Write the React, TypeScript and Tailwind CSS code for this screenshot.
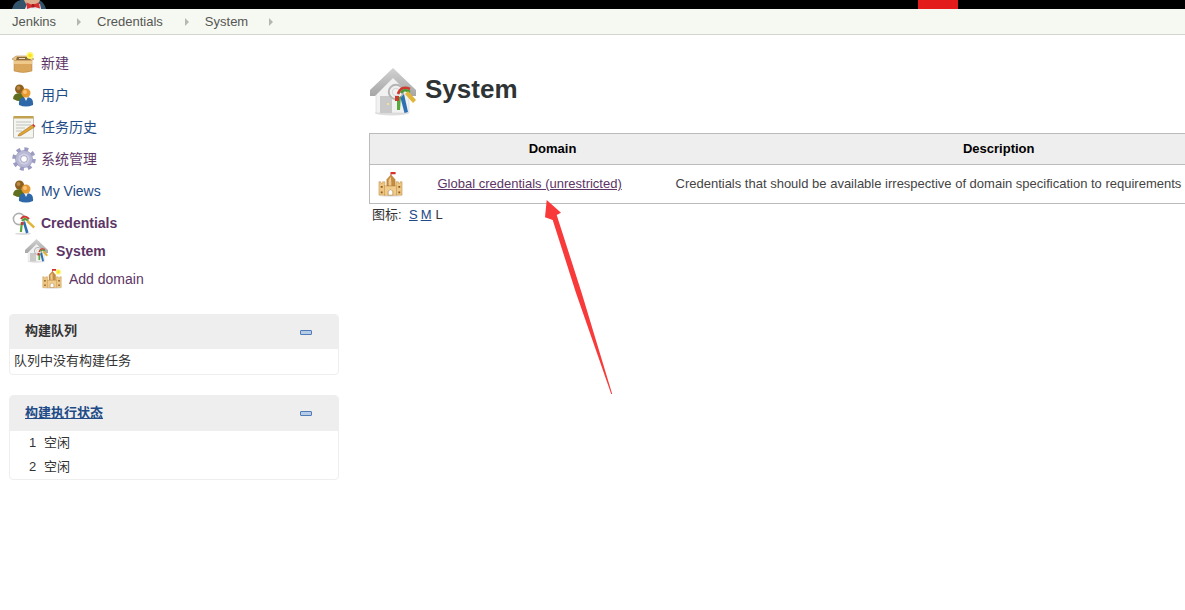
import React from "react";

const Box = ({ s = 24 }: { s?: number }) => (
  <svg width={s} height={s} viewBox="1 0 24 24">
    <path d="M1 8 L5 5 H18 L23 8 L20 10 H4Z" fill="#e6c48a" stroke="#a87f45" strokeWidth=".5" />
    <path d="M6 6 H18 L20 9 H5Z" fill="#8c6a3c" />
    <path d="M8 7h6v1H8z" fill="#e9dcc0" />
    <path d="M3 10 H21 V20 Q12 23 3 20Z" fill="#d9a65c" stroke="#b2823f" strokeWidth=".5" />
    <path d="M3 10 H21 V13 H3Z" fill="#efc98a" />
    <circle cx="19" cy="4.5" r="3.5" fill="#fdf56a" />
    <circle cx="19" cy="4.5" r="1.8" fill="#fbe11e" />
  </svg>
);

const Users = ({ s = 24 }: { s?: number }) => (
  <svg width={s} height={s} viewBox="0 0 24 24">
    <path d="M1 16 Q1 10 8 10 Q14 10 14 17 Q8 20 1 16Z" fill="#5f6f1f" />
    <circle cx="7.5" cy="6" r="4.5" fill="#8e5f1e" />
    <circle cx="6.5" cy="5" r="2" fill="#b88a45" />
    <path d="M7 22 Q6 14 14 14 Q22 14 21 22 Q14 25 7 22Z" fill="#2f68a8" />
    <path d="M12 14 L14 18 L16 14Z" fill="#e8eef6" />
    <circle cx="14" cy="10" r="4.5" fill="#e59a32" />
    <circle cx="13" cy="9" r="2" fill="#f6c47a" />
  </svg>
);

const Notepad = ({ s = 24 }: { s?: number }) => (
  <svg width={s} height={s} viewBox="0 0 24 24">
    <rect x="1.5" y="2" width="20" height="21" rx="1" fill="#f4f4f0" stroke="#a9a9a0" strokeWidth=".7" />
    <rect x="1.5" y="1" width="20" height="2.5" fill="#c2a24f" />
    <path d="M4 7h15M4 10h15M4 13h9M4 16h6" stroke="#c4c4bd" strokeWidth="1" />
    <path d="M7 19 L20 10 L22.5 12 L9 20.5 L6 21Z" fill="#e3a532" stroke="#96601a" strokeWidth=".5" />
    <path d="M20 10 L22.5 12 L23.5 11 L21.3 9Z" fill="#c9352a" />
  </svg>
);

const Gear = ({ s = 24 }: { s?: number }) => (
  <svg width={s} height={s} viewBox="0 0 24 24">
    <circle cx="12" cy="12" r="9.8" fill="none" stroke="#9c9cc2" strokeWidth="4" strokeDasharray="3.85 3.85" />
    <circle cx="12" cy="12" r="8.6" fill="#b9b9d6" stroke="#9292b8" strokeWidth=".6" />
    <circle cx="12" cy="12" r="5.6" fill="#d0d0e4" />
    <circle cx="12" cy="12" r="3.4" fill="#fff" stroke="#8585ac" strokeWidth=".7" />
  </svg>
);

const Keys = ({ s = 24 }: { s?: number }) => (
  <svg width={s} height={s} viewBox="0 0 24 24">
    <ellipse cx="11" cy="22.8" rx="8" ry="1.1" fill="#dcdcdc" />
    <circle cx="7" cy="8" r="5.6" fill="none" stroke="#b0b0b0" strokeWidth="1.6" />
    <path d="M9 8 Q12 3 17 8" fill="none" stroke="#cf3a30" strokeWidth="2.2" />
    <path d="M10 10 Q13 6 16 10" fill="none" stroke="#4a9c34" strokeWidth="2" />
    <path d="M16 9 L23 15.5 L21.5 17.5 L14.5 11Z" fill="#dfb53a" />
    <path d="M11 11 L10 21 H7.8 L8.8 11Z" fill="#58a83a" />
    <path d="M13 10 L16.5 21.5 L14 22.5 L11 12Z" fill="#2c6fb3" />
    <path d="M9 11 h2.5 v3 h-2.5Z" fill="#cf3a30" />
  </svg>
);

const House = ({ s = 24, id }: { s?: number; id: string }) => (
  <svg width={s} height={s} viewBox="0 0 48 48">
    <defs>
      <linearGradient id={id} x1="0" y1="0" x2="0" y2="1">
        <stop offset="0" stopColor="#d2d2d2" />
        <stop offset="1" stopColor="#a6a6a6" />
      </linearGradient>
    </defs>
    <ellipse cx="22" cy="45" rx="17" ry="2.4" fill="#dedede" />
    <path d="M6 22 L23 6 L39 22 V45 H6Z" fill="#f1f1f1" stroke="#d4d4d4" strokeWidth=".6" />
    <path d="M0 22 L23 0 L46 22 V28 L41 28 L23 10 L5 28 L0 28Z" fill={`url(#${id})`} />
    <rect x="10" y="28" width="12" height="17" fill="#c9c9c9" />
    <rect x="17" y="35" width="2" height="2" fill="#f4e38e" />
    <circle cx="26" cy="24" r="7.2" fill="none" stroke="#b5b5b5" strokeWidth="2" />
    <circle cx="26" cy="24" r="3.6" fill="none" stroke="#d9d9d9" strokeWidth="1.2" />
    <path d="M28 26 Q31 17 40 21" fill="none" stroke="#cf3a30" strokeWidth="2.6" />
    <path d="M31 25 Q34 20 40 24" fill="none" stroke="#4a9c34" strokeWidth="2.6" />
    <path d="M38 23 L46 32 L43 35 L35 26Z" fill="#dfb53a" />
    <path d="M31 28 L30 42 H27 L27 30Z" fill="#58a83a" />
    <path d="M25 28 h4 v5 h-4Z" fill="#cf3a30" />
    <path d="M34 26 L38 44 L34.5 45 L30.5 30Z" fill="#2c6fb3" />
  </svg>
);

const Castle = ({ s = 24, star = false }: { s?: number; star?: boolean }) => (
  <svg width={s} height={s} viewBox="0 0 25 27">
    <ellipse cx="12.5" cy="26" rx="12" ry="1" fill="#eaeaea" />
    <path d="M0 10.5 h2v1.5h2v-1.5h2.5V25H0Z" fill="#eec583" stroke="#b98a41" strokeWidth=".5" />
    <path d="M18.5 10.5 h2.5v1.5h2v-1.5h2V25h-6.5Z" fill="#eec583" stroke="#b98a41" strokeWidth=".5" />
    <rect x="6" y="15" width="13" height="10" fill="#f0cb8b" stroke="#b98a41" strokeWidth=".5" />
    <path d="M8.5 15 V8 L13 3 L17.5 8 V15Z" fill="#c68c3e" stroke="#a87430" strokeWidth=".4" />
    <path d="M10.5 14.5 V8.5 L13 5 L13.5 14.5Z" fill="#ecc990" />
    <path d="M10 25 V20.5 Q12.5 17.5 15 20.5 V25Z" fill="#fff" stroke="#a87430" strokeWidth=".6" />
    <path d="M2 15h2v2H2zM21 15h2v2h-2zM2 21h2v2H2zM21 21h2v2h-2z" fill="#8a5c20" />
    {star ? (
      <>
        <circle cx="21" cy="4" r="3.6" fill="#fdf66e" />
        <circle cx="21" cy="4" r="1.8" fill="#f9e020" />
      </>
    ) : null}
    <path d="M12.5 3.5 V0 H18 V2.5 H13.4 V3.5Z" fill="#d4312a" />
  </svg>
);

const Minus = () => (
  <span className="block h-[5px] w-[12px] rounded-[1px] border border-[#4f7cb5] bg-[#b5cbe6]" />
);

const Chevron = () => (
  <span className="block h-0 w-0 border-y-[4px] border-l-[4px] border-y-transparent border-l-[#b4b9b0]" />
);

function NavRow({
  icon,
  label,
  cls,
}: {
  icon: React.ReactNode;
  label: string;
  cls: string;
}) {
  return (
    <div className="flex h-8 items-center pl-[12px]">
      <span className="flex w-[29px] shrink-0">{icon}</span>
      <span className={cls}>{label}</span>
    </div>
  );
}

export default function App() {
  return (
    <div className="relative h-[610px] w-[1185px] overflow-hidden bg-white font-['Liberation_Sans','Noto_Sans_CJK_SC',sans-serif] text-[13px] text-[#333]">
      <header className="flex h-[9px] items-end overflow-hidden bg-black">
        <svg className="ml-[12px] shrink-0" width="34" height="9" viewBox="0 0 34 9">
          <path d="M0 9 Q2 1 9 0 H27 Q32 2 34 9Z" fill="#34546c" />
          <path d="M12 0 H28 L26 4 H14Z" fill="#dcae8e" />
          <path d="M13 9 L15 4 H28 L29 9Z" fill="#e9ecef" />
          <path d="M14.5 2.5 L20.5 5 L27 2.5 L28 8.5 L21.5 6.8 L15 9Z" fill="#d92f2f" />
          <rect x="19.5" y="4" width="3" height="3.5" fill="#a51d1d" />
        </svg>
        <div className="ml-[872px] h-[9px] w-[40px] bg-[#e31b1b]" />
      </header>

      <nav className="flex h-[26px] items-center border-b border-[#d3d7cf] bg-[#f6f8f2] pl-[12px] text-[#555753]">
        <span>Jenkins</span>
        <span className="ml-[21px]"><Chevron /></span>
        <span className="ml-[16px]">Credentials</span>
        <span className="ml-[22px]"><Chevron /></span>
        <span className="ml-[16px]">System</span>
        <span className="ml-[21px]"><Chevron /></span>
      </nav>

      <div className="flex">
        <aside className="w-[339px] shrink-0 pt-[12px] text-[14px]">
          <NavRow icon={<Box />} label="新建" cls="text-[#5c3566]" />
          <NavRow icon={<Users />} label="用户" cls="text-[#204a87]" />
          <NavRow icon={<Notepad />} label="任务历史" cls="text-[#204a87]" />
          <NavRow icon={<Gear />} label="系统管理" cls="text-[#5c3566]" />
          <NavRow icon={<Users />} label="My Views" cls="text-[#204a87]" />
          <NavRow icon={<Keys />} label="Credentials" cls="font-bold text-[#5c3566]" />
          <div className="flex h-6 items-center pl-[25px]">
            <span className="flex w-[31px] shrink-0"><House id="roofSmall" /></span>
            <span className="font-bold text-[#5c3566]">System</span>
          </div>
          <div className="mt-1 flex h-6 items-center pl-[42px]">
            <span className="flex w-[27px] shrink-0"><Castle s={20} star /></span>
            <span className="text-[#5c3566]">Add domain</span>
          </div>

          <section className="ml-[9px] mt-[23px] h-[61px] w-[330px] rounded-[4px] border border-[#eeeeee]">
            <div className="flex h-[34px] items-center justify-between rounded-t-[3px] bg-[#eeeeee] pl-[15px] pr-[26px]">
              <span className="pb-[2px] text-[13px] font-bold">构建队列</span>
              <Minus />
            </div>
            <div className="pl-[4px] pt-[3px] text-[13px] leading-[18px]">队列中没有构建任务</div>
          </section>

          <section className="ml-[9px] mt-[20px] h-[85px] w-[330px] rounded-[4px] border border-[#eeeeee]">
            <div className="flex h-[35px] items-center justify-between rounded-t-[3px] bg-[#eeeeee] pl-[15px] pr-[26px]">
              <span className="pb-[2px] text-[13px] font-bold text-[#204a87] underline">构建执行状态</span>
              <Minus />
            </div>
            <div className="flex h-[24px] items-center pl-[19px] text-[13px]">
              <span className="w-[15px]">1</span>
              <span>空闲</span>
            </div>
            <div className="flex h-[24px] items-center pl-[19px] text-[13px]">
              <span className="w-[15px]">2</span>
              <span>空闲</span>
            </div>
          </section>
        </aside>

        <main className="min-w-0 pl-[30px] pt-[33px]">
          <div className="flex h-[48px] items-center pl-[1px]">
            <House s={48} id="roofLarge" />
            <h1 className="ml-[7px] pb-[6px] text-[26px] font-bold text-[#2e3436]">System</h1>
          </div>
          <table className="mt-[17px] w-[961px] table-fixed border-collapse border border-[#bbbbbb] text-[13px]">
            <colgroup>
              <col className="w-[68px]" />
              <col className="w-[230px]" />
              <col className="w-[663px]" />
            </colgroup>
            <thead>
              <tr className="h-[31px] border-b border-[#bbbbbb] bg-[#eeeeee] font-bold text-black">
                <th></th>
                <th>Domain</th>
                <th>Description</th>
              </tr>
            </thead>
            <tbody>
              <tr className="h-[39px]">
                <td className="pl-[8px]"><Castle s={25} /></td>
                <td className="whitespace-nowrap text-[#5c3566] underline">Global credentials (unrestricted)</td>
                <td className="whitespace-nowrap pl-[8px] text-[#444]">
                  Credentials that should be available irrespective of domain specification to requirements
                </td>
              </tr>
            </tbody>
          </table>
          <div className="flex h-[22px] items-center pl-[3px] text-[13px]">
            <span className="w-[37px]">图标:</span>
            <span className="text-[#204a87] underline">S</span>
            <span className="ml-[3px] text-[#204a87] underline">M</span>
            <span className="ml-[4px]">L</span>
          </div>
        </main>
      </div>

      <svg className="pointer-events-none absolute left-[540px] top-[195px]" width="80" height="205" viewBox="0 0 80 205">
        <path d="M6.7 5 L5 22.3 L12.7 25 L36 98 L71.2 199 L72.2 199 L41.7 98 L16.7 20 L21 17.7Z" fill="#f83a3a" />
      </svg>
    </div>
  );
}
